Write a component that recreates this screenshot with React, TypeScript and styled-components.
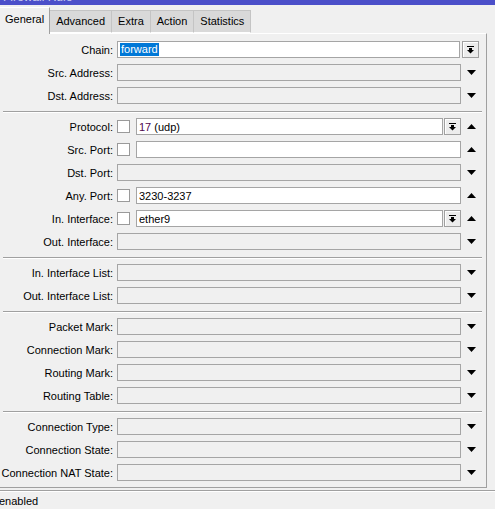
import React from "react";
import styled, { createGlobalStyle } from "styled-components";

const GlobalStyle = createGlobalStyle`
  html, body { margin: 0; padding: 0; background: #f0f0f0; }
  body {
    font-family: "Liberation Sans", Arial, sans-serif;
    font-size: 11px;
    color: #000;
  }
`;

const Window = styled.div`
  width: 495px;
  height: 509px;
  overflow: hidden;
  display: flex;
  flex-direction: column;
  background: #f0f0f0;
`;

const TitleBar = styled.div`
  height: 5px;
  flex: none;
  background: #4b4fc9;
  overflow: hidden;
  position: relative;
`;

const TitleText = styled.div`
  margin-top: -9px;
  padding-left: 3px;
  font-size: 12px;
  line-height: 12px;
  color: #c9cbf0;
  white-space: nowrap;
`;

const TabStrip = styled.div`
  height: 28px;
  flex: none;
  display: flex;
  align-items: flex-end;
  position: relative;
  z-index: 1;
`;

const Tab = styled.div<{ $active?: boolean }>`
  box-sizing: border-box;
  height: ${(p) => (p.$active ? 27 : 23)}px;
  margin-bottom: ${(p) => (p.$active ? -1 : 0)}px;
  padding: 0 ${(p) => (p.$active ? 5 : 6)}px;
  display: flex;
  align-items: center;
  padding-bottom: ${(p) => (p.$active ? 4 : 1)}px;
  background: ${(p) => (p.$active ? "#f0f0f0" : "#d9d9d9")};
  border: 1px solid ${(p) => (p.$active ? "#ffffff" : "#c4c4c4")};
  border-right-color: ${(p) => (p.$active ? "#a0a0a0" : "#c4c4c4")};
  border-bottom: ${(p) => (p.$active ? "none" : "1px solid #ffffff")};
  border-left: ${(p) => (p.$active ? "none" : "0")};
  white-space: nowrap;
  font-size: 11px;
`;

const Panel = styled.div`
  box-sizing: border-box;
  width: 487px;
  height: 455px;
  flex: none;
  border-top: 1px solid #ffffff;
  border-right: 1px solid #a0a0a0;
  border-bottom: 1px solid #a0a0a0;
  padding: 4px 4px 0 0;
  display: flex;
  flex-direction: column;
`;

const Row = styled.div`
  height: 23px;
  flex: none;
  display: flex;
  align-items: center;
`;

const Label = styled.div`
  width: 113px;
  flex: none;
  margin-right: 4px;
  text-align: right;
  white-space: nowrap;
`;

const FieldArea = styled.div<{ $wide?: boolean }>`
  width: ${(p) => (p.$wide ? 362 : 344)}px;
  flex: none;
  display: flex;
  align-items: center;
`;

const Check = styled.div`
  box-sizing: border-box;
  width: 13px;
  height: 13px;
  flex: none;
  border: 1px solid #9a9a9a;
  background: #ffffff;
  margin-right: 6px;
`;

const Input = styled.div<{ $disabled?: boolean }>`
  box-sizing: border-box;
  flex: 1;
  min-width: 0;
  height: 17px;
  border: 1px solid #a5a5a5;
  background: ${(p) => (p.$disabled ? "#f0f0f0" : "#ffffff")};
  display: flex;
  align-items: center;
  padding-left: 2px;
  white-space: nowrap;
  overflow: hidden;
`;

const Selected = styled.span`
  background: #0078d7;
  color: #ffffff;
  padding: 0 1px;
  line-height: 13px;
`;

const ProtoNum = styled.span`
  color: #4f0750;
`;

const DropButton = styled.div<{ $gap: number }>`
  box-sizing: border-box;
  width: 17px;
  height: 17px;
  flex: none;
  margin-left: ${(p) => p.$gap}px;
  border: 1px solid #a0a0a0;
  box-shadow: inset 1px 1px 0 #ffffff;
  background: #ececec;
  display: flex;
  align-items: center;
  justify-content: center;
`;

const ArrowCell = styled.div`
  width: 21px;
  flex: none;
  display: flex;
  align-items: center;
  justify-content: center;
`;

const Separator = styled.div`
  flex: none;
  height: 1px;
  margin: 4px 0 2px 3px;
  background: #a0a0a0;
  border-bottom: 1px solid #ffffff;
`;

const StatusBar = styled.div`
  margin-top: 2px;
  flex: 1;
  border-top: 1px solid #a0a0a0;
  box-shadow: inset 0 1px 0 #ffffff;
  display: flex;
  align-items: center;
  padding-left: 0;
`;

const StatusText = styled.span`
  margin-left: -1px;
  margin-top: 1px;
`;

const DropIcon = () => (
  <svg width="7" height="8" viewBox="0 0 7 8">
    <rect x="0" y="0" width="7" height="1" fill="#000" />
    <rect x="2" y="2" width="3" height="2" fill="#000" />
    <polygon points="0,4 7,4 3.5,7.5" fill="#000" />
  </svg>
);

const Tri = ({ up }: { up?: boolean }) => (
  <svg width="9" height="5" viewBox="0 0 9 5">
    <polygon points={up ? "0,5 9,5 4.5,0" : "0,0 9,0 4.5,5"} fill="#000" />
  </svg>
);

type Field = {
  label: string;
  check?: boolean;
  disabled?: boolean;
  value?: React.ReactNode;
  button?: boolean;
  up?: boolean;
  wide?: boolean;
};

const groups: Field[][] = [
  [
    { label: "Chain:", value: <Selected>forward</Selected>, button: true, wide: true },
    { label: "Src. Address:", disabled: true },
    { label: "Dst. Address:", disabled: true },
  ],
  [
    {
      label: "Protocol:",
      check: true,
      value: (
        <span>
          <ProtoNum>17</ProtoNum> (udp)
        </span>
      ),
      button: true,
      up: true,
    },
    { label: "Src. Port:", check: true, up: true },
    { label: "Dst. Port:", disabled: true },
    { label: "Any. Port:", check: true, value: "3230-3237", up: true },
    { label: "In. Interface:", check: true, value: "ether9", button: true, up: true },
    { label: "Out. Interface:", disabled: true },
  ],
  [
    { label: "In. Interface List:", disabled: true },
    { label: "Out. Interface List:", disabled: true },
  ],
  [
    { label: "Packet Mark:", disabled: true },
    { label: "Connection Mark:", disabled: true },
    { label: "Routing Mark:", disabled: true },
    { label: "Routing Table:", disabled: true },
  ],
  [
    { label: "Connection Type:", disabled: true },
    { label: "Connection State:", disabled: true },
    { label: "Connection NAT State:", disabled: true },
  ],
];

const FieldRow = ({ f }: { f: Field }) => (
  <Row>
    <Label>{f.label}</Label>
    <FieldArea $wide={f.wide}>
      {f.check && <Check />}
      <Input $disabled={f.disabled}>{f.value}</Input>
      {f.button && (
        <DropButton $gap={f.wide ? 2 : 1}>
          <DropIcon />
        </DropButton>
      )}
    </FieldArea>
    {!f.wide && (
      <ArrowCell>
        <Tri up={f.up} />
      </ArrowCell>
    )}
  </Row>
);

const tabs = ["General", "Advanced", "Extra", "Action", "Statistics"];

export default function App() {
  return (
    <>
      <GlobalStyle />
      <Window>
        <TitleBar>
          <TitleText>Firewall Rule &lt;&gt;</TitleText>
        </TitleBar>
        <TabStrip>
          {tabs.map((t, i) => (
            <Tab key={t} $active={i === 0}>
              {t}
            </Tab>
          ))}
        </TabStrip>
        <Panel>
          {groups.map((g, gi) => (
            <React.Fragment key={gi}>
              {gi > 0 && <Separator />}
              {g.map((f) => (
                <FieldRow key={f.label} f={f} />
              ))}
            </React.Fragment>
          ))}
        </Panel>
        <StatusBar>
          <StatusText>enabled</StatusText>
        </StatusBar>
      </Window>
    </>
  );
}
